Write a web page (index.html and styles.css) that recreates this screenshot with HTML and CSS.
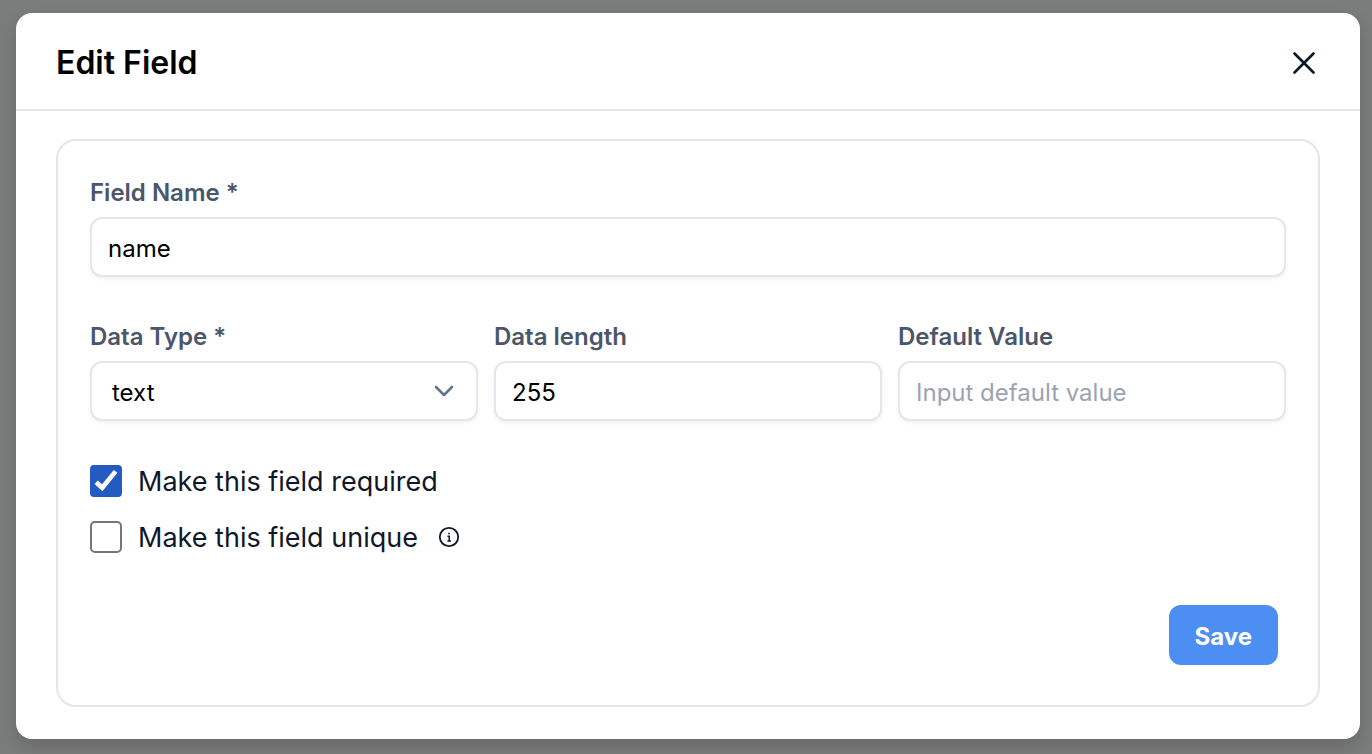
FILE: index.html
```html
<!DOCTYPE html>
<html lang="en">
<head>
<meta charset="utf-8">
<meta name="viewport" content="width=device-width, initial-scale=1">
<title>Edit Field</title>
<link rel="stylesheet" href="styles.css">
</head>
<body>
<main class="modal" role="dialog" aria-labelledby="modal-title">
  <header class="modal-header">
    <h1 class="modal-title" id="modal-title">Edit Field</h1>
    <button class="close" type="button" aria-label="Close">
      <svg width="24" height="24" viewBox="0 0 24 24" fill="none" stroke="currentColor" stroke-width="2.6" stroke-linecap="round"><path d="M2.5 2.5 21.5 21.5M21.5 2.5 2.5 21.5"/></svg>
    </button>
  </header>
  <div class="modal-body">
    <form class="card">
      <div class="field">
        <label class="label" for="name">Field Name *</label>
        <input class="control" id="name" type="text" value="name">
      </div>
      <div class="row">
        <div class="field">
          <label class="label" for="type">Data Type *</label>
          <div class="select-wrap">
            <select class="control select" id="type"><option>text</option></select>
            <svg class="chevron" width="20" height="12" viewBox="0 0 20 12" fill="none" stroke="currentColor" stroke-width="2.6" stroke-linecap="round" stroke-linejoin="round"><path d="M2 2l8 8 8-8"/></svg>
          </div>
        </div>
        <div class="field">
          <label class="label" for="length">Data length</label>
          <input class="control" id="length" type="text" inputmode="numeric" value="255">
        </div>
        <div class="field">
          <label class="label" for="default">Default Value</label>
          <input class="control" id="default" type="text" placeholder="Input default value">
        </div>
      </div>
      <div class="checks">
        <div class="check-row">
          <span class="box-wrap">
            <input class="box" id="required" type="checkbox" checked>
            <svg class="tick" width="32" height="32" viewBox="0 0 32 32" fill="none" stroke="currentColor" stroke-width="4.6"><path d="M6.2 17.2 12.2 22.8 25.6 6.4"/></svg>
          </span>
          <label class="check-label" for="required">Make this field required</label>
        </div>
        <div class="check-row">
          <span class="box-wrap"><input class="box" id="unique" type="checkbox"></span>
          <label class="check-label" for="unique">Make this field unique</label>
          <svg class="info" width="22" height="22" viewBox="0 0 22 22" fill="none" stroke="currentColor"><circle cx="11" cy="11" r="9.2" stroke-width="1.8"/><path d="M9.4 10.2h1.8v4.6M9.4 15h3.6M10.2 7.4h1.6" stroke-width="1.5"/></svg>
        </div>
      </div>
      <div class="actions">
        <button class="save" type="button">Save</button>
      </div>
    </form>
  </div>
</main>
</body>
</html>
```
FILE: styles.css
```css
* {
  box-sizing: border-box;
}

body {
  margin: 0;
  padding: 13px 12px 15px 16px;
  background: #7b7d7c;
  color: #0f172a;
  font-family: Inter, "Liberation Sans", sans-serif;
}

.modal {
  background: #fff;
  border-radius: 16px;
  box-shadow: 0 8px 20px rgba(0, 0, 0, 0.16);
}

.modal-header {
  display: flex;
  align-items: center;
  justify-content: space-between;
  padding: 26px 44px 22px 40px;
  border-bottom: 2px solid #e5e5eb;
}

.modal-title {
  margin: 0;
  color: #000;
  font-size: 32px;
  font-weight: 600;
  line-height: 48px;
}

.close {
  display: flex;
  padding: 0;
  border: 0;
  background: none;
  color: #0f172a;
}

.modal-body {
  padding: 28px 40px 32px;
}

.card {
  padding: 32px 32px 40px;
  border: 2px solid #e5e5eb;
  border-radius: 20px;
}

.row {
  display: grid;
  grid-template-columns: repeat(3, 1fr);
  gap: 16px;
  margin-top: 40px;
}

.field {
  display: flex;
  flex-direction: column;
  gap: 4px;
  min-width: 0;
}

.label {
  color: #4b5669;
  font-size: 24px;
  font-weight: 600;
  line-height: 40px;
}

.control {
  width: 100%;
  height: 60px;
  padding: 2px 16px 0;
  border: 2px solid #e5e5eb;
  border-radius: 12px;
  background: #fff;
  box-shadow: 0 2px 4px rgba(0, 0, 0, 0.06);
  color: #000;
  font-family: inherit;
  font-size: 24px;
}

.control::placeholder {
  color: #9ca3af;
  opacity: 1;
}

.select-wrap {
  position: relative;
}

.select {
  display: block;
  appearance: none;
  padding: 2px 20px 0;
}

.chevron {
  position: absolute;
  top: 24px;
  right: 24px;
  color: #64748b;
  pointer-events: none;
}

.checks {
  display: flex;
  flex-direction: column;
  gap: 24px;
  margin-top: 44px;
}

.check-row {
  display: flex;
  align-items: center;
}

.box-wrap {
  display: flex;
  position: relative;
  margin-right: 16px;
}

.box {
  width: 32px;
  height: 32px;
  margin: 0;
  appearance: none;
  border: 2px solid #767676;
  border-radius: 5px;
  background: #fff;
}

.box:checked {
  border-color: #245bc1;
  border-radius: 4px;
  background: #245bc1;
}

.tick {
  display: none;
  position: absolute;
  inset: 0;
  color: #fff;
  pointer-events: none;
}

.box:checked + .tick {
  display: block;
}

.check-label {
  padding-top: 2px;
  font-size: 27px;
  line-height: 30px;
}

.info {
  margin-left: 20px;
}

.actions {
  display: flex;
  justify-content: flex-end;
  margin-top: 52px;
  padding-right: 8px;
}

.save {
  height: 60px;
  padding: 2px 26px 0;
  border: 0;
  border-radius: 12px;
  background: #4d8ef2;
  color: #fff;
  font-family: inherit;
  font-size: 24px;
  font-weight: 700;
}
```
